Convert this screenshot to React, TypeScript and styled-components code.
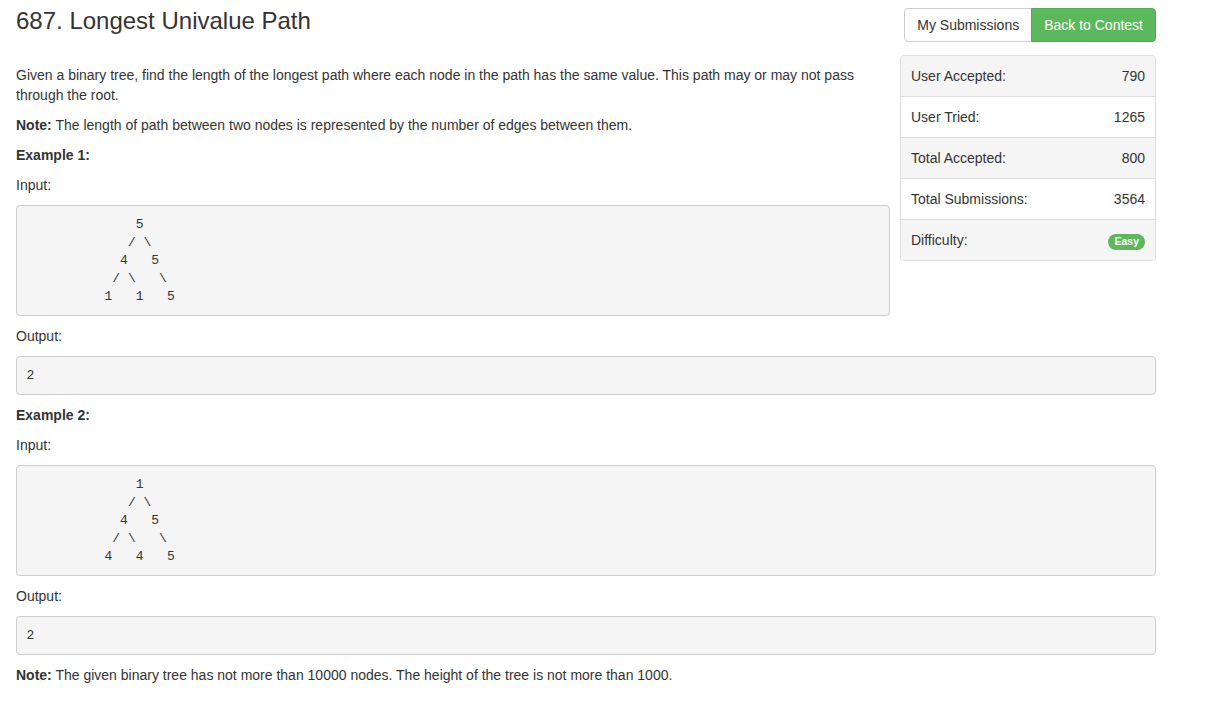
import React from "react";
import styled, { createGlobalStyle } from "styled-components";

const Global = createGlobalStyle`
  html, body { margin: 0; padding: 0; background: #fff; }
  body {
    font-family: "Liberation Sans", Arial, sans-serif;
    font-size: 14px;
    line-height: 1.42857143;
    color: #333;
  }
  * { box-sizing: border-box; }
`;

const Page = styled.div`
  width: 1140px;
  margin-left: 16px;
  padding-top: 8px;
`;

const Header = styled.div`
  display: flex;
  justify-content: space-between;
  align-items: flex-start;
  height: 34px;
`;

const Title = styled.h3`
  margin: 0;
  font-size: 24px;
  font-weight: 500;
  line-height: 1.1;
  color: #333;
`;

const BtnGroup = styled.div`
  display: flex;
`;

const Button = styled.a<{ $primary?: boolean }>`
  display: inline-block;
  padding: 6px 12px;
  font-size: 14px;
  line-height: 20px;
  border: 1px solid ${(p) => (p.$primary ? "#4cae4c" : "#ccc")};
  background: ${(p) => (p.$primary ? "#5cb85c" : "#fff")};
  color: ${(p) => (p.$primary ? "#fff" : "#333")};
  border-radius: ${(p) => (p.$primary ? "0 4px 4px 0" : "4px 0 0 4px")};
  margin-left: ${(p) => (p.$primary ? "-1px" : "0")};
  text-decoration: none;
  cursor: pointer;
`;

const Body = styled.div`
  margin-top: 13px;
`;

const Panel = styled.div`
  float: right;
  width: 256px;
  margin-left: 10px;
  border: 1px solid #ddd;
  border-radius: 4px;
  overflow: hidden;
`;

const StatRow = styled.div<{ $striped: boolean }>`
  display: flex;
  justify-content: space-between;
  align-items: center;
  padding: 10px 10px;
  line-height: 20px;
  background: ${(p) => (p.$striped ? "#f5f5f5" : "#fff")};
  & + & { border-top: 1px solid #ddd; }
`;

const Badge = styled.span`
  display: inline-block;
  background: #5cb85c;
  color: #fff;
  font-size: 10.5px;
  font-weight: bold;
  line-height: 1;
  padding: 2px 6px 3px;
  border-radius: 10px;
`;

const Description = styled.div`
  padding-top: 10px;
`;

const P = styled.p`
  margin: 0 0 10px;
`;

const Pre = styled.pre`
  display: block;
  margin: 0 0 10px;
  padding: 9.5px;
  font-family: "Liberation Mono", "DejaVu Sans Mono", monospace;
  font-size: 13px;
  line-height: 18px;
  color: #333;
  background: #f5f5f5;
  border: 1px solid #ccc;
  border-radius: 4px;
  overflow: auto;
  white-space: pre;
`;

const stats: { label: string; value: React.ReactNode }[] = [
  { label: "User Accepted:", value: "790" },
  { label: "User Tried:", value: "1265" },
  { label: "Total Accepted:", value: "800" },
  { label: "Total Submissions:", value: "3564" },
  { label: "Difficulty:", value: <Badge>Easy</Badge> },
];

const tree1 = [
  "              5",
  "             / \\",
  "            4   5",
  "           / \\   \\",
  "          1   1   5",
].join("\n");

const tree2 = [
  "              1",
  "             / \\",
  "            4   5",
  "           / \\   \\",
  "          4   4   5",
].join("\n");

export default function App() {
  return (
    <>
      <Global />
      <Page>
        <Header>
          <Title>687. Longest Univalue Path</Title>
          <BtnGroup>
            <Button>My Submissions</Button>
            <Button $primary>Back to Contest</Button>
          </BtnGroup>
        </Header>
        <Body>
          <Panel>
            {stats.map((s, i) => (
              <StatRow key={s.label} $striped={i % 2 === 0}>
                <span>{s.label}</span>
                <span>{s.value}</span>
              </StatRow>
            ))}
          </Panel>
          <Description>
            <P>
              Given a binary tree, find the length of the longest path where each node in the path
              has the same value. This path may or may not pass through the root.
            </P>
            <P>
              <b>Note:</b> The length of path between two nodes is represented by the number of
              edges between them.
            </P>
            <P>
              <b>Example 1:</b>
            </P>
            <P>Input:</P>
            <Pre>{tree1}</Pre>
            <P>Output:</P>
            <Pre>2</Pre>
            <P>
              <b>Example 2:</b>
            </P>
            <P>Input:</P>
            <Pre>{tree2}</Pre>
            <P>Output:</P>
            <Pre>2</Pre>
            <P>
              <b>Note:</b> The given binary tree has not more than 10000 nodes. The height of the
              tree is not more than 1000.
            </P>
          </Description>
        </Body>
      </Page>
    </>
  );
}
